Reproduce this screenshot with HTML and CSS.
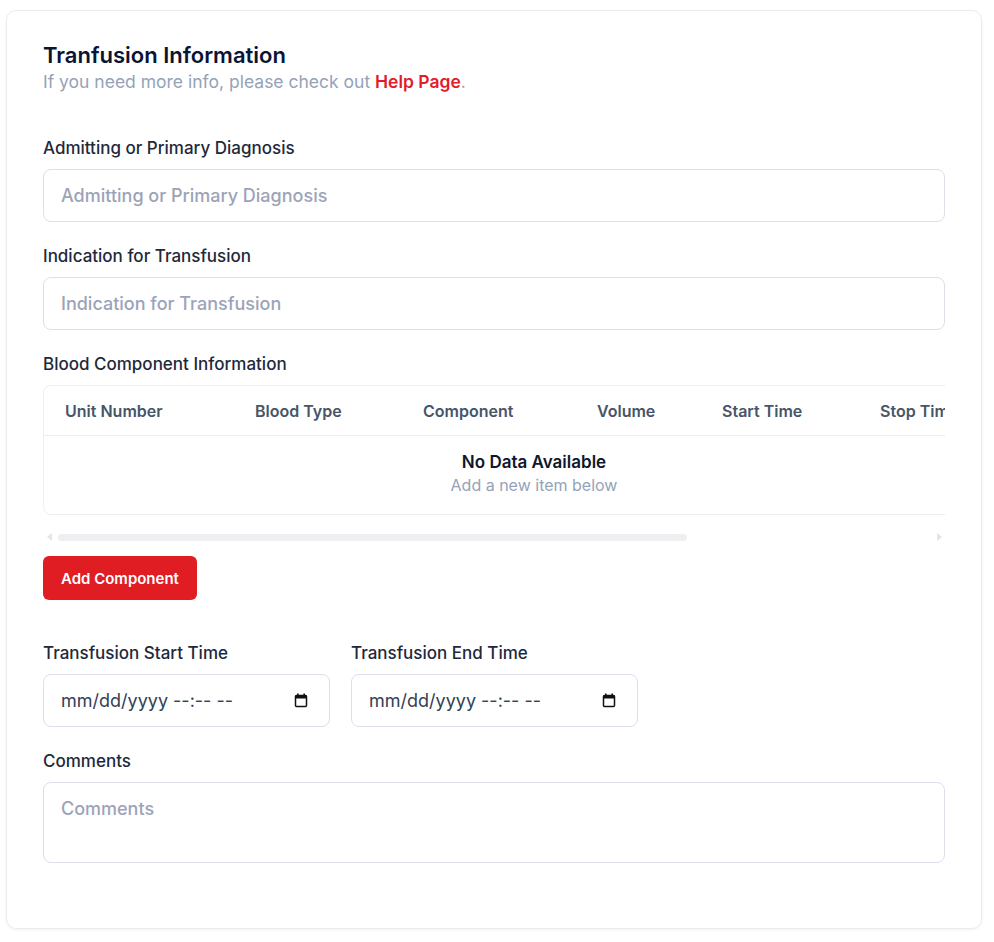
FILE: index.html
```html
<!DOCTYPE html>
<html lang="en">
<head>
<meta charset="utf-8">
<title>Tranfusion Information</title>
<link rel="stylesheet" href="styles.css">
</head>
<body>
<div class="card">
  <header class="card-head">
    <h1 class="title">Tranfusion Information</h1>
    <p class="subtitle">If you need more info, please check out <a class="help" href="#">Help Page</a>.</p>
  </header>

  <div class="field">
    <label class="label">Admitting or Primary Diagnosis</label>
    <input class="input" type="text" placeholder="Admitting or Primary Diagnosis">
  </div>

  <div class="field">
    <label class="label">Indication for Transfusion</label>
    <input class="input" type="text" placeholder="Indication for Transfusion">
  </div>

  <div class="field">
    <label class="label">Blood Component Information</label>
    <div class="table-wrap">
      <table class="table">
        <thead>
          <tr>
            <th class="c1">Unit Number</th>
            <th class="c2">Blood Type</th>
            <th class="c3">Component</th>
            <th class="c4">Volume</th>
            <th class="c5">Start Time</th>
            <th class="c6">Stop Time</th>
            <th class="c7">Reaction</th>
            <th class="c8">Actions</th>
          </tr>
        </thead>
        <tbody>
          <tr>
            <td colspan="8" class="empty-cell">
              <div class="empty">
                <div class="empty-title">No Data Available</div>
                <div class="empty-sub">Add a new item below</div>
              </div>
            </td>
          </tr>
        </tbody>
      </table>
    </div>
    <div class="scrollbar" aria-hidden="true">
      <span class="arrow arrow-left"></span>
      <div class="track"><div class="thumb"></div></div>
      <span class="arrow arrow-right"></span>
    </div>
    <button class="btn" type="button">Add Component</button>
  </div>

  <div class="row">
    <div class="field half">
      <label class="label">Transfusion Start Time</label>
      <div class="input date">
        <input class="date-text" type="text" placeholder="mm/dd/yyyy --:-- --">
        <svg class="cal" width="14" height="15" viewBox="0 0 14 15" aria-hidden="true">
          <rect x="3" y="0.5" width="1.6" height="3" fill="#111"/>
          <rect x="9.4" y="0.5" width="1.6" height="3" fill="#111"/>
          <rect x="1.5" y="2.5" width="11" height="11" rx="1" fill="none" stroke="#111" stroke-width="1.5"/>
          <rect x="1.5" y="2.5" width="11" height="3" fill="#111"/>
        </svg>
      </div>
    </div>
    <div class="field half">
      <label class="label">Transfusion End Time</label>
      <div class="input date">
        <input class="date-text" type="text" placeholder="mm/dd/yyyy --:-- --">
        <svg class="cal" width="14" height="15" viewBox="0 0 14 15" aria-hidden="true">
          <rect x="3" y="0.5" width="1.6" height="3" fill="#111"/>
          <rect x="9.4" y="0.5" width="1.6" height="3" fill="#111"/>
          <rect x="1.5" y="2.5" width="11" height="11" rx="1" fill="none" stroke="#111" stroke-width="1.5"/>
          <rect x="1.5" y="2.5" width="11" height="3" fill="#111"/>
        </svg>
      </div>
    </div>
  </div>

  <div class="field last">
    <label class="label">Comments</label>
    <textarea class="input textarea" placeholder="Comments"></textarea>
  </div>
</div>
</body>
</html>
```

FILE: styles.css
```css
* { box-sizing: border-box; }
html, body { margin: 0; padding: 0; background: #ffffff; }
body {
  font-family: Inter, "Noto Sans", sans-serif;
  color: #1e293b;
  padding: 10px 12px 14px 6px;
}
.card {
  border: 1px solid #ececf0;
  border-radius: 10px;
  box-shadow: 0 1px 3px rgba(15, 23, 42, 0.06);
  padding: 30px 36px 0 36px;
  width: 976px;
  height: 919px;
}
.card-head { margin-bottom: 41px; }
.title {
  margin: 0;
  font-size: 22px;
  line-height: 28px;
  font-weight: 600;
  color: #0b1533;
}
.subtitle {
  margin: 0;
  font-size: 17.5px;
  line-height: 26px;
  color: #94a3b8;
  font-weight: 400;
}
.help { color: #e11d2a; font-weight: 600; text-decoration: none; }

.field { display: flex; flex-direction: column; margin-bottom: 22px; }
.label {
  font-size: 17px;
  line-height: 24px;
  font-weight: 500;
  color: #1e293b;
  margin-bottom: 9px;
}
.input {
  font-family: Inter, "Noto Sans", sans-serif;
  height: 53px;
  border: 1px solid #dcdfea;
  border-radius: 8px;
  padding: 0 17px;
  font-size: 18px;
  font-weight: 500;
  color: #334155;
  background: #fff;
  outline: none;
  width: 100%;
}
.input::placeholder { color: #9ca3b8; font-weight: 500; }
.textarea { height: 81px; padding-top: 14px; resize: none; line-height: 24px; }

.table-wrap {
  overflow: hidden;
}
.table {
  width: 1265px;
  border-collapse: separate;
  border-spacing: 0;
  border: 1px solid #eceef2;
  border-radius: 8px;
  table-layout: fixed;
}
.table th {
  text-align: left;
  font-size: 16px;
  font-weight: 600;
  color: #475569;
  height: 50px;
  padding: 0 21px;
  border-bottom: 1px solid #eceef2;
  white-space: nowrap;
}
.c1 { width: 190px; }
.c2 { width: 168px; }
.c3 { width: 174px; }
.c4 { width: 125px; }
.c5 { width: 158px; }
.c6 { width: 150px; }
.c7 { width: 150px; }
.empty-cell { padding: 0 0 4px 0; height: 78px; }
.empty { width: 980px; text-align: center; }
.empty-title { font-size: 17px; font-weight: 600; color: #0f172a; line-height: 24px; }
.empty-sub { font-size: 16px; color: #94a3b8; line-height: 22px; }

.scrollbar {
  display: flex;
  align-items: center;
  height: 10px;
  margin-top: 17px;
  padding: 0 3px 0 4px;
}
.arrow { width: 0; height: 0; border-top: 4px solid transparent; border-bottom: 4px solid transparent; }
.arrow-left { border-right: 5px solid #e4e4e8; }
.arrow-right { border-left: 5px solid #e4e4e8; }
.track { flex: 1; height: 7px; padding: 0 5px 0 6px; }
.thumb { width: 629px; height: 7px; border-radius: 4px; background: #efeff1; }

.btn {
  align-self: flex-start;
  margin-top: 14px;
  height: 44px;
  padding: 0 18px;
  background: #e11d24;
  color: #fff;
  border: none;
  border-radius: 6px;
  font-family: Inter, "Noto Sans", sans-serif;
  font-size: 15px;
  font-weight: 600;
}
.row { display: flex; gap: 21px; margin-top: 41px; }
.half { width: 287px; }
.date { display: flex; align-items: center; padding-right: 21px; }
.date-text {
  flex: 1;
  min-width: 0;
  border: none;
  outline: none;
  background: transparent;
  padding: 0;
  font-family: Inter, "Noto Sans", sans-serif;
  font-size: 18px;
  font-weight: 400;
  color: #334155;
}
.date-text::placeholder { color: #334155; opacity: 1; }
.cal { flex: none; }
.last { margin-bottom: 0; }
```
